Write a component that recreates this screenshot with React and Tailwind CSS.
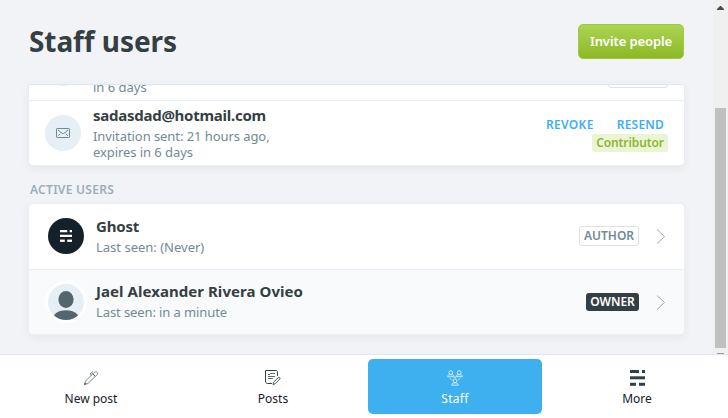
import React from 'react';

function MailIcon() {
  return (
    <svg width="14" height="10" viewBox="0 0 14 10" fill="none" stroke="#738a94" strokeWidth="1">
      <rect x="0.5" y="0.5" width="13" height="9" rx="0.6" />
      <path d="M2 2l4 3.3c.6.5 1.400.5 2 0L12 2M2.200 7.600l2-1.800M11.800 7.600l-2-1.800" />
    </svg>
  );
}

function GhostMark({ width, height, color }) {
  return (
    <svg width={width} height={height} viewBox="0 0 15 16" preserveAspectRatio="none" fill={color}>
      <rect x="0" y="0" width="9" height="3" />
      <rect x="12" y="0" width="3" height="3" />
      <rect x="0" y="6.300" width="15" height="3" />
      <rect x="0" y="12.800" width="6" height="3" />
      <rect x="9" y="12.800" width="6" height="3" />
    </svg>
  );
}

function PersonAvatar() {
  return (
    <svg width="36" height="36" viewBox="0 0 36 36">
      <defs>
        <clipPath id="avatar-circle"><circle cx="18" cy="18" r="18" /></clipPath>
      </defs>
      <g clipPath="url(#avatar-circle)">
        <rect width="36" height="36" fill="#e5eff5" />
        <ellipse cx="18" cy="15.500" rx="7.600" ry="8.500" fill="#54666d" />
        <path d="M4 36C5.500 29 11 26.300 18 26.300S30.500 29 32 36z" fill="#54666d" />
      </g>
    </svg>
  );
}

function Chevron() {
  return (
    <svg width="9" height="15" viewBox="0 0 9 15" fill="none" stroke="#90a2aa" strokeWidth="0.9">
      <path d="M1 0.500l7.500 7-7.500 7" />
    </svg>
  );
}

function PenIcon() {
  return (
    <svg width="16" height="16" viewBox="0 0 16 16" fill="none" stroke="#5d686d" strokeWidth="0.8" strokeLinejoin="round">
      <path d="M1.500 14.500l1-3.400 7.300-7.300 2.500 2.500L5 13.500z" />
      <path d="M9 3.200l3.700 3.700M10.300 3.600l1.200-1.200c.7-.8 1.900-.8 2.600-.1s.6 1.800-.1 2.500l-1.200 1.200M8.500 5L7 3.900 10 1.500" />
      <path d="M1.300 14.800l1.800-1.800" strokeWidth="1.300" />
    </svg>
  );
}

function PostsIcon() {
  return (
    <svg width="16" height="16" viewBox="0 0 16 16" fill="none" stroke="#394448" strokeWidth="1" strokeLinejoin="round">
      <path d="M12.500 6V2c0-.8-.6-1.500-1.500-1.500H.5v10.500c0 1.400.7 2.500 2 2.500H7" />
      <path d="M3 4.500h2M5 3.500h5M3 6.500h7M3 8.500h5" strokeWidth="0.8" />
      <path d="M8 14.500l.6-2.300 4.700-4.700c.9-.8 2.400.6 1.600 1.500l-4.700 4.700z" strokeWidth="0.9" />
    </svg>
  );
}

function StaffIcon() {
  return (
    <svg width="16" height="16" viewBox="0 0 16 16" fill="none" stroke="#d3ecfb" strokeWidth="0.95">
      <circle cx="3.800" cy="2.600" r="1.900" />
      <path d="M.6 6.700c0-1.500 1.100-2 3.200-2s3.200.5 3.200 2z" />
      <circle cx="12.200" cy="2.600" r="1.900" />
      <path d="M9 6.700c0-1.500 1.100-2 3.200-2s3.200.5 3.200 2z" />
      <circle cx="8" cy="10.800" r="1.900" />
      <path d="M4.800 15.200c0-1.700 1.100-2.300 3.200-2.300s3.200.6 3.200 2.300z" />
      <path d="M2.800 8.200l2 2M13.200 8.200l-2 2M6.800 7.700L8 7l1.200.7" />
    </svg>
  );
}

function NavItem({ icon, label, active, tracking }) {
  return (
    <a
      className={`flex h-[55px] w-[174px] flex-col items-center rounded-[5px] pt-[11px] text-xs leading-[18px] ${
        active ? 'bg-[#3eb0ef] text-white' : 'text-[#15212a]'
      }`}
    >
      <span className="flex h-4 items-center">{icon}</span>
      <span className={`mt-1 ${tracking || ''}`}>{label}</span>
    </a>
  );
}

export default function App() {
  return (
    <div className="flex h-[418px] w-[728px] flex-col overflow-hidden bg-[#f2f3f7] font-['Noto_Sans',sans-serif] text-[13px] text-[#343f44]">
      <div className="flex h-[354px]">
        <main className="h-[354px] w-[713px] overflow-hidden px-7">
          <header className="flex h-[84px] items-start justify-between pt-6 pr-px">
            <h1 className="pl-px text-[28px] leading-[35px] font-bold tracking-[-0.08px]">Staff users</h1>
            <button className="h-[35px] w-[106px] rounded-[5px] border border-[#9fcb3f] bg-linear-to-b from-[#abd452] to-[#8cb922] text-[13px] font-semibold tracking-[-0.1px] text-white">
              Invite people
            </button>
          </header>

          <section className="h-[82px] rounded-b-[5px] border border-[#e8edf2] border-t-[#dbe8f0] bg-white shadow-[0_3px_8px_rgba(39,44,49,0.06)]">
            <div className="flex h-[15px] items-start justify-between overflow-hidden pr-4 pl-4">
              <div className="flex items-start">
                <span className="-mt-[35px] size-9 rounded-full bg-[#e5eff5]" />
                <p className="-mt-[6px] ml-3 leading-4 text-[#738a94]">in 6 days</p>
              </div>
              <span className="-mt-[17px] h-5 w-[60px] rounded-[3px] border border-[#dfe1e3]" />
            </div>
            <div className="flex h-[65px] items-start border-t border-[#e5eff5] pr-4 pl-4">
              <span className="mt-[14px] flex size-9 items-center justify-center rounded-full bg-[#e5eff5]">
                <MailIcon />
              </span>
              <div className="ml-3 w-[200px] pt-1">
                <h3 className="text-[15px] leading-5 font-bold tracking-[-0.26px]">sadasdad@hotmail.com</h3>
                <p className="mt-[3px] leading-4 tracking-[-0.07px] text-[#738a94]">
                  Invitation sent: 21 hours ago,<br />expires in 6 days
                </p>
              </div>
              <div className="ml-auto flex flex-col items-end pt-[15px]">
                <div className="flex gap-[23px] pr-1 text-xs leading-[18px] font-semibold text-[#3eb0ef]">
                  <a className="tracking-[0.35px]">REVOKE</a>
                  <a className="tracking-[0.2px]">RESEND</a>
                </div>
                <span className="h-[18px] w-[76px] rounded-[3px] bg-[#ebf5d6] text-center text-xs leading-[17px] font-semibold tracking-[-0.1px] text-[#8fb62c]">
                  Contributor
                </span>
              </div>
            </div>
          </section>

          <h2 className="mt-[15px] h-[22px] pl-[2px] text-xs leading-[18px] font-semibold tracking-[0.28px] text-[#9baeb8]">
            ACTIVE USERS
          </h2>

          <section className="h-[132px] rounded-[5px] border border-[#ebeff3] bg-white shadow-[0_3px_8px_rgba(39,44,49,0.06)]">
            <div className="flex h-[65px] items-center pr-[19px] pb-px pl-[19px]">
              <span className="flex size-9 items-center justify-center rounded-full bg-[#15212a]">
                <GhostMark width="12" height="12" color="#ffffff" />
              </span>
              <div className="ml-3 pb-px">
                <h3 className="text-[15px] leading-5 font-bold tracking-[-0.2px]">Ghost</h3>
                <p className="mt-[3px] leading-4 text-[#738a94]">Last seen: (Never)</p>
              </div>
              <span className="mr-[17px] ml-auto h-5 w-[60px] rounded-[3px] border border-[#dfe1e3] text-center text-xs leading-[17px] font-semibold text-[#738a94]">
                AUTHOR
              </span>
              <Chevron />
            </div>
            <div className="flex h-[65px] items-center rounded-b-[4px] border-t border-[#e5eff5] bg-[#f9fafc] pr-[19px] pl-[19px]">
              <span className="-ml-[3px] rounded-full bg-white p-[3px]">
                <PersonAvatar />
              </span>
              <div className="ml-[9px] pb-[3px]">
                <h3 className="text-[15px] leading-5 font-bold tracking-[0.05px]">Jael Alexander Rivera Ovieo</h3>
                <p className="mt-[3px] leading-4 tracking-[-0.1px] text-[#738a94]">Last seen: in a minute</p>
              </div>
              <span className="mr-[17px] ml-auto h-[18px] w-[53px] rounded-[3px] bg-[#343f44] text-center text-xs leading-[17px] font-semibold text-white">
                OWNER
              </span>
              <Chevron />
            </div>
          </section>
        </main>

        <aside className="flex w-[15px] flex-col items-center bg-[#f0f0f0] pt-[6px]">
          <svg width="7" height="4" viewBox="0 0 7 4" fill="#4d4d4d"><path d="M3 0h1l3 3v1H0V3z" /></svg>
          <span className="mt-[98px] h-60 w-[11px] bg-[#c0c0c0]" />
          <span className="mt-[5px] h-px w-[7px] bg-[#9b9b9b]" />
        </aside>
      </div>

      <nav className="flex h-16 justify-between border-t border-[#dfe8ef] bg-white px-1 pt-1">
        <NavItem icon={<PenIcon />} label="New post" />
        <NavItem icon={<PostsIcon />} label="Posts" />
        <NavItem icon={<StaffIcon />} label="Staff" active tracking="tracking-[0.3px]" />
        <NavItem icon={<GhostMark width="15" height="16" color="#343f44" />} label="More" />
      </nav>
    </div>
  );
}
